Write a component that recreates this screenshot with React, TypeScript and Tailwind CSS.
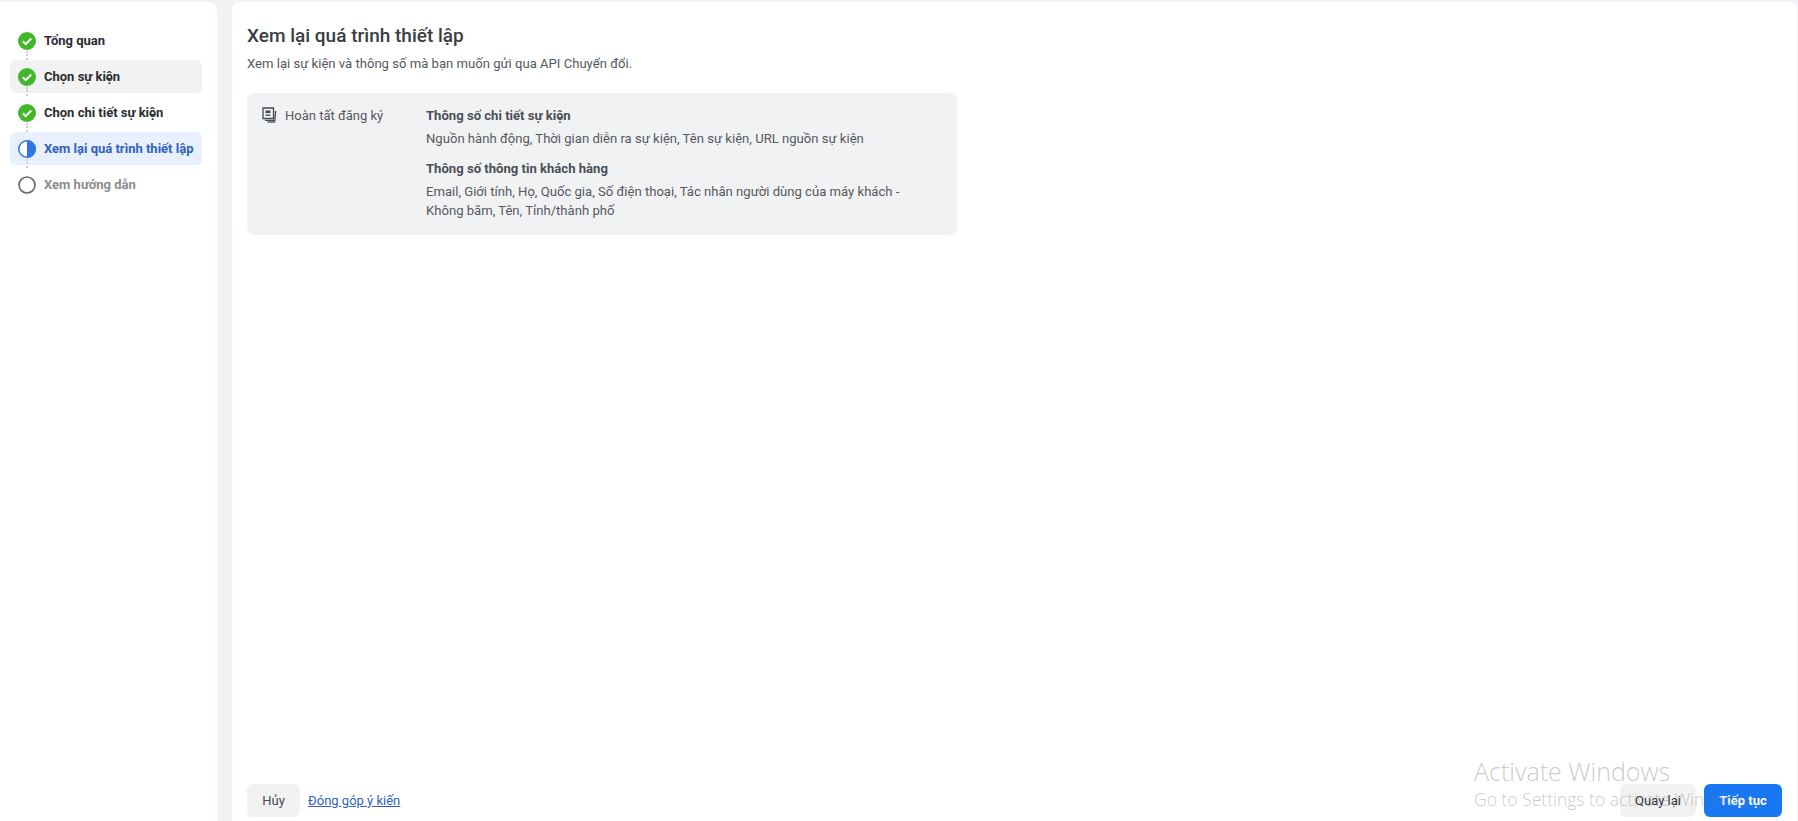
import React from 'react';

const font = { fontFamily: 'Roboto' };

const steps = [
  { label: 'Tổng quan', state: 'done', rowClass: '', textClass: 'text-[#2a2c30]' },
  { label: 'Chọn sự kiện', state: 'done', rowClass: 'bg-[#f2f2f2]', textClass: 'text-[#2a2c30]' },
  { label: 'Chọn chi tiết sự kiện', state: 'done', rowClass: '', textClass: 'text-[#2a2c30]' },
  { label: 'Xem lại quá trình thiết lập', state: 'active', rowClass: 'bg-[#e7f0fc]', textClass: 'text-[#2f62c0]' },
  { label: 'Xem hướng dẫn', state: 'todo', rowClass: '', textClass: 'text-[#8a8d91]' },
];

const StepIcon = ({ state }: { state: string }) => {
  if (state === 'done') {
    return (
      <svg width="18" height="18" viewBox="0 0 18 18">
        <circle cx="9" cy="9" r="9" fill="#42b72a" />
        <path d="M4.8 9.3l2.9 2.8 5.5-5.6" fill="none" stroke="#fff" strokeWidth="2" />
      </svg>
    );
  }
  if (state === 'active') {
    return (
      <svg width="18" height="18" viewBox="0 0 18 18">
        <circle cx="9" cy="9" r="8.2" fill="#fff" stroke="#2d76e6" strokeWidth="1.5" />
        <path d="M9 0a9 9 0 0 1 0 18z" fill="#2d76e6" />
      </svg>
    );
  }
  return (
    <svg width="18" height="18" viewBox="0 0 18 18">
      <circle cx="9" cy="9" r="8" fill="#fff" stroke="#606770" strokeWidth="1.6" />
    </svg>
  );
};

const EventIcon = () => (
  <svg width="16" height="16" viewBox="0 0 16 16" fill="none" stroke="#444950" strokeWidth="1.3">
    <path d="M1 1h10.5v10.5H1z" />
    <path d="M3 13.3h9.8l.9-9.3" />
    <path d="M5.5 15h7.8" />
    <path d="M3.5 3.5h5v2.6h-5z" fill="#444950" stroke="none" />
    <path d="M3.5 8.2h5" />
  </svg>
);

export default function App() {
  return (
    <div className="relative h-screen w-full overflow-hidden bg-[#f0f2f5] flex pt-[2px] pr-px" style={font}>
      {/* Steps */}
      <div className="w-[217px] shrink-0 bg-white rounded-tr-lg pt-[22px] pl-[10px]">
        <div className="w-[192px] flex flex-col gap-[3px]">
          {steps.map((s, i) => (
            <div key={s.label} className={`relative h-[33px] rounded-md flex items-center pl-[8px] gap-[8px] ${s.rowClass}`}>
              <StepIcon state={s.state} />
              <span className={`text-[13px] font-bold whitespace-nowrap ${s.textClass}`}>{s.label}</span>
              {i < steps.length - 1 && (
                <div className="absolute left-[16px] top-[27px] h-[9px] border-l-2 border-dotted border-[#ccd0d5]" />
              )}
            </div>
          ))}
        </div>
      </div>

      {/* Main */}
      <div className="ml-[15px] flex-1 bg-white rounded-t-lg flex flex-col pl-[15px] pr-[15px] pb-[4px]">
        <h1 className="mt-[21px] text-[19px] leading-[26px] font-medium text-[#3a3d42]">Xem lại quá trình thiết lập</h1>
        <p className="mt-[7px] text-[13.1px] leading-[16px] text-[#55585e]">
          Xem lại sự kiện và thông số mà bạn muốn gửi qua API Chuyển đổi.
        </p>

        <div className="mt-[21px] w-[710px] h-[142px] rounded-lg bg-[#f1f2f4] flex pt-[14px] pl-[15px]">
          <div className="w-[164px] shrink-0 flex gap-[7px] items-start">
            <EventIcon />
            <span className="text-[13px] leading-[18px] text-[#55585e]">Hoàn tất đăng ký</span>
          </div>
          <div className="w-[490px] text-[13.1px] text-[#55585e]">
            <div className="leading-[18px] font-bold text-[#4b4f56]">Thông số chi tiết sự kiện</div>
            <div className="mt-[5px] leading-[18px]">Nguồn hành động, Thời gian diễn ra sự kiện, Tên sự kiện, URL nguồn sự kiện</div>
            <div className="mt-[12px] leading-[18px] font-bold text-[#4b4f56]">Thông số thông tin khách hàng</div>
            <div className="mt-[4px] leading-[19px]">
              Email, Giới tính, Họ, Quốc gia, Số điện thoại, Tác nhân người dùng của máy khách - Không băm, Tên, Tỉnh/thành phố
            </div>
          </div>
        </div>

        <div className="mt-auto flex items-center">
          <button className="w-[53px] h-[33px] rounded-md bg-[#f2f2f2] text-[13px] text-[#444950]">Hủy</button>
          <a className="ml-[8px] text-[13px] text-[#2f62c0] underline">Đóng góp ý kiến</a>
          <button className="ml-auto w-[76px] h-[33px] rounded-md bg-[#f2f2f2] text-[13px] text-[#303338]">Quay lại</button>
          <button className="ml-[8px] w-[78px] h-[33px] rounded-md bg-[#1877f2] text-[13px] font-bold text-white">Tiếp tục</button>
        </div>
      </div>

      {/* Windows watermark */}
      <div className="absolute left-[1474px] top-[755px] pointer-events-none whitespace-nowrap text-[#77777766]" style={{ fontFamily: 'Open Sans' }}>
        <div className="text-[25px] leading-[32px] font-light">Activate Windows</div>
        <div className="text-[17.5px] leading-[25px] font-light">Go to Settings to activate Windows.</div>
      </div>
    </div>
  );
}
